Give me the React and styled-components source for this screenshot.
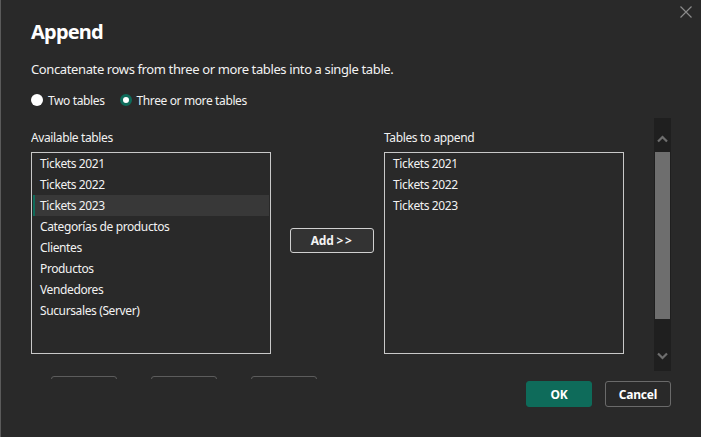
import React, { useState } from "react";
import styled, { createGlobalStyle } from "styled-components";

const GlobalStyle = createGlobalStyle`
  html, body {
    margin: 0;
    padding: 0;
    background: #292929;
  }
  body {
    font-family: "Noto Sans", "Open Sans", sans-serif;
    color: #f2f2f2;
    letter-spacing: -0.38px;
  }
`;

const available = [
  "Tickets 2021",
  "Tickets 2022",
  "Tickets 2023",
  "Categorías de productos",
  "Clientes",
  "Productos",
  "Vendedores",
  "Sucursales (Server)",
];

const toAppend = ["Tickets 2021", "Tickets 2022", "Tickets 2023"];

function App() {
  const [mode, setMode] = useState("many");
  const [selected, setSelected] = useState(2);

  return (
    <>
      <GlobalStyle />
      <Dialog>
        <Header>
          <Title>Append</Title>
          <CloseButton aria-label="Close">
            <svg width="12" height="12" viewBox="0 0 12 12">
              <path d="M0.5 0.5 L11.5 11.5 M11.5 0.5 L0.5 11.5" stroke="#8a8a8a" strokeWidth="1.2" />
            </svg>
          </CloseButton>
        </Header>
        <Description>
          Concatenate rows from three or more tables into a single table.
        </Description>
        <RadioRow>
          <RadioLabel onClick={() => setMode("two")}>
            <Radio checked={mode === "two"} />
            Two tables
          </RadioLabel>
          <RadioLabel onClick={() => setMode("many")}>
            <Radio checked={mode === "many"} />
            Three or more tables
          </RadioLabel>
        </RadioRow>

        <Body>
          <ScrollArea>
            <Columns>
              <Column>
                <FieldLabel>Available tables</FieldLabel>
                <ListBox>
                  {available.map((name, i) => (
                    <ListItem
                      key={name}
                      selected={i === selected}
                      onClick={() => setSelected(i)}
                    >
                      {name}
                    </ListItem>
                  ))}
                </ListBox>
              </Column>
              <Middle>
                <AddButton>
                  Add <Chevrons>&gt;&gt;</Chevrons>
                </AddButton>
              </Middle>
              <Column>
                <FieldLabel>Tables to append</FieldLabel>
                <ListBox>
                  {toAppend.map((name) => (
                    <ListItem key={name}>{name}</ListItem>
                  ))}
                </ListBox>
              </Column>
            </Columns>
          </ScrollArea>
          <Scrollbar>
            <Arrow offset={8}>
              <svg width="11" height="8" viewBox="0 0 11 8">
                <path d="M1 6.5 L5.5 2 L10 6.5" fill="none" stroke="#6e6e6e" strokeWidth="2.2" />
              </svg>
            </Arrow>
            <Track>
              <Thumb />
            </Track>
            <Arrow offset={4}>
              <svg width="11" height="8" viewBox="0 0 11 8">
                <path d="M1 1.5 L5.5 6 L10 1.5" fill="none" stroke="#6e6e6e" strokeWidth="2.2" />
              </svg>
            </Arrow>
          </Scrollbar>
        </Body>

        <Footer>
          <ClippedRow>
            <GhostButton />
            <GhostButton />
            <GhostButton />
          </ClippedRow>
          <Actions>
            <ActionButton primary>OK</ActionButton>
            <ActionButton>Cancel</ActionButton>
          </Actions>
        </Footer>
      </Dialog>
    </>
  );
}

export default App;

const Dialog = styled.div`
  box-sizing: border-box;
  width: 701px;
  height: 437px;
  border-left: 1px solid #5a5a5a;
  background: #292929;
  padding: 0 30px 0 30px;
  overflow: hidden;
`;

const Header = styled.div`
  display: flex;
  justify-content: space-between;
  align-items: flex-start;
  height: 50px;
`;

const Title = styled.h1`
  margin: 18px 0 0 0;
  font-size: 20px;
  font-weight: 700;
  line-height: 28px;
  letter-spacing: -0.8px;
  color: #ffffff;
`;

const CloseButton = styled.button`
  margin: 6px -21px 0 0;
  padding: 0;
  border: none;
  background: none;
  width: 12px;
  height: 12px;
  display: flex;
  cursor: pointer;
`;

const Description = styled.p`
  margin: 10px 0 0 0;
  font-size: 13px;
  line-height: 18px;
`;

const RadioRow = styled.div`
  display: flex;
  gap: 15px;
  margin-top: 13px;
  height: 18px;
  align-items: center;
`;

const RadioLabel = styled.label`
  display: flex;
  align-items: center;
  gap: 5px;
  font-size: 12px;
  cursor: pointer;
`;

const Radio = styled.span`
  box-sizing: border-box;
  width: 12px;
  height: 12px;
  border-radius: 50%;
  background: #ffffff;
  border: ${(p) => (p.checked ? "3px solid #0e6b5a" : "none")};
`;

const Body = styled.div`
  display: flex;
  margin-top: 9px;
  height: 253px;
`;

const ScrollArea = styled.div`
  flex: 1;
  overflow: hidden;
  padding-top: 12px;
`;

const Columns = styled.div`
  display: flex;
  align-items: stretch;
`;

const Column = styled.div`
  display: flex;
  flex-direction: column;
  width: 240px;
`;

const FieldLabel = styled.div`
  font-size: 12px;
  line-height: 16px;
  height: 22px;
`;

const ListBox = styled.div`
  box-sizing: border-box;
  height: 202px;
  border: 1px solid #c8c8c8;
  padding: 0 1px 1px 1px;
  display: flex;
  flex-direction: column;
`;

const ListItem = styled.div`
  height: 21px;
  line-height: 21px;
  padding-left: 5px;
  font-size: 12px;
  background: ${(p) => (p.selected ? "#383838" : "transparent")};
  border-left: 2px solid ${(p) => (p.selected ? "#0e6b5a" : "transparent")};
  white-space: nowrap;
  cursor: default;
`;

const Middle = styled.div`
  display: flex;
  align-items: flex-start;
  padding: 98px 10px 0 19px;
`;

const AddButton = styled.button`
  box-sizing: border-box;
  width: 84px;
  height: 25px;
  border: 1px solid #d0d0d0;
  border-radius: 3px;
  background: #333333;
  color: #f2f2f2;
  font-family: inherit;
  font-size: 12px;
  font-weight: 700;
  letter-spacing: -0.2px;
  padding: 0;
`;

const Chevrons = styled.span`
  letter-spacing: 1.5px;
`;

const Scrollbar = styled.div`
  width: 17px;
  background: #1f1f1f;
  display: flex;
  flex-direction: column;
`;

const Arrow = styled.div`
  box-sizing: border-box;
  height: 34px;
  padding-top: ${(p) => p.offset}px;
  display: flex;
  align-items: center;
  justify-content: center;
`;

const Track = styled.div`
  flex: 1;
  display: flex;
  justify-content: center;
`;

const Thumb = styled.div`
  width: 15px;
  height: 167px;
  background: #6e6e6e;
`;

const Footer = styled.div`
  display: flex;
  flex-direction: column;
`;

const ClippedRow = styled.div`
  display: flex;
  gap: 34px;
  padding-left: 20px;
  margin-top: 5px;
  height: 3px;
  overflow: hidden;
`;

const GhostButton = styled.div`
  box-sizing: border-box;
  width: 66px;
  height: 20px;
  border: 1px solid #5c5c5c;
  border-radius: 3px;
`;

const Actions = styled.div`
  display: flex;
  justify-content: flex-end;
  gap: 13px;
  margin-top: 2px;
`;

const ActionButton = styled.button`
  box-sizing: border-box;
  width: 66px;
  height: 26px;
  border-radius: 3px;
  font-family: inherit;
  font-size: 12px;
  font-weight: 700;
  letter-spacing: -0.2px;
  color: #ffffff;
  padding: 0;
  background: ${(p) => (p.primary ? "#0e6b5a" : "transparent")};
  border: 1px solid ${(p) => (p.primary ? "#0e6b5a" : "#6a6a6a")};
`;
